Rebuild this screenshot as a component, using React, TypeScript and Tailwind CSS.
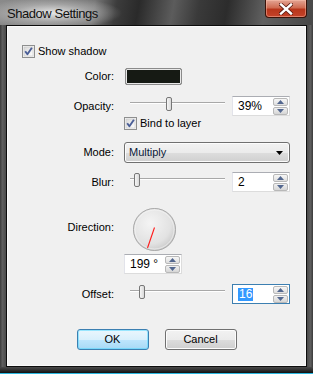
import React from "react";

const font = "font-['Liberation_Sans',Arial,sans-serif]";

function CheckBox() {
  return (
    <svg width="13" height="13" viewBox="0 0 13 13" className="shrink-0">
      <defs>
        <linearGradient id="cbg" x1="0" y1="0" x2="1" y2="1">
          <stop offset="0" stopColor="#d8d8d8" />
          <stop offset="1" stopColor="#ffffff" />
        </linearGradient>
      </defs>
      <rect x="0.5" y="0.5" width="12" height="12" fill="#f4f4f4" stroke="#8e8f8f" />
      <rect x="2" y="2" width="9" height="9" fill="url(#cbg)" stroke="#c6c6c6" strokeWidth="0.6" />
      <path d="M3.2 6.3 L5.4 9.3 L9.9 2.8" fill="none" stroke="#4a5e97" strokeWidth="1.9" strokeLinejoin="round" />
    </svg>
  );
}

function Spin() {
  return (
    <div className="flex flex-col w-[15px] h-[17px] gap-px">
      <div className="flex-1 flex items-center justify-center rounded-[2px] border border-[#b8b8b8] bg-[linear-gradient(#f7f7f7,#dedede)]">
        <svg width="7" height="4" viewBox="0 0 7 4"><path d="M0 4 L3.5 0 L7 4 Z" fill="#53678f" /></svg>
      </div>
      <div className="flex-1 flex items-center justify-center rounded-[2px] border border-[#b8b8b8] bg-[linear-gradient(#f0f0f0,#d6d6d6)]">
        <svg width="7" height="4" viewBox="0 0 7 4"><path d="M0 0 L3.5 4 L7 0 Z" fill="#53678f" /></svg>
      </div>
    </div>
  );
}

function NumBox({ value, focused, selected }: { value: string; focused?: boolean; selected?: boolean }) {
  return (
    <div
      className={
        "w-[58px] h-[20px] flex items-center justify-between bg-white border pl-[5px] pr-[1px] " +
        (focused ? "border-[#3c7fb1]" : "border-[#dcdcdc] border-t-[#abadb3] border-l-[#e2e3ea]")
      }
    >
      {selected ? (
        <span className="bg-[#3399ff] text-white px-[1px] leading-[13px] text-[12px]">{value}</span>
      ) : (
        <span className="text-[12px] text-black">{value}</span>
      )}
      <Spin />
    </div>
  );
}

function Slider({ pos }: { pos: number }) {
  return (
    <div className="relative w-[105px] h-[20px] shrink-0">
      <div className="absolute left-[6px] right-[4px] top-[6px] h-[2px] border-t border-t-[#a8a8a8] border-b border-b-[#ffffff]" />
      <div
        className="absolute top-[1px] w-[6px] h-[14px] rounded-[2px] border border-[#777777] bg-[linear-gradient(90deg,#f6f6f6,#d9d9d9)]"
        style={{ left: pos }}
      />
    </div>
  );
}

function Label({ children, extra }: { children: React.ReactNode; extra?: string }) {
  return <div className={"w-[107px] shrink-0 text-right text-[11px] text-black " + (extra || "")}>{children}</div>;
}

export default function App() {
  return (
    <div className={"w-[313px] h-[374px] flex flex-col bg-[#2a2a2a] overflow-hidden " + font}>
      {/* Title bar */}
      <div className="relative h-[25px] shrink-0 bg-[radial-gradient(ellipse_70px_16px_at_52px_13px,rgba(235,235,235,0.95),rgba(200,200,200,0.5)_55%,transparent_100%),linear-gradient(100deg,#8a8a8a_0%,#767676_30%,#3c3c3c_37%,#2a2a2a_44%,#5c5c5c_55%,#3a3a3a_63%,#2c2c2c_72%,#606060_84%,#474747_100%)]">
        <div className="absolute left-[7px] top-[4px] text-[13px] tracking-[-0.45px] text-[#111]">Shadow Settings</div>
        <div className="absolute right-[6px] top-0 w-[42px] h-[18px] rounded-b-[4px] border border-t-0 border-[#3b1208] bg-[linear-gradient(#e3a594_0%,#cf6c52_45%,#b8361b_55%,#c5432a_100%)] flex items-center justify-center shadow-[inset_0_0_0_1px_rgba(255,200,180,0.45)]">
          <svg width="14" height="12" viewBox="0 0 14 12">
            <path d="M2 1.5 L12 10.5 M12 1.5 L2 10.5" stroke="#5a1a10" strokeWidth="4" strokeLinecap="square" />
            <path d="M2 1.5 L12 10.5 M12 1.5 L2 10.5" stroke="#ffffff" strokeWidth="2.4" strokeLinecap="square" />
          </svg>
        </div>
      </div>

      {/* Middle with side frames */}
      <div className="flex flex-1">
        <div className="w-[6px] bg-[linear-gradient(90deg,#3a3a3a,#5e5e5e_40%,#4a4a4a)]" />
        <div className="flex-1 border border-[#0c0c0c] bg-[#f0f0f0] flex flex-col shadow-[inset_0_0_0_1px_#fafafa]">
          {/* Show shadow */}
          <div className="mt-[18px] h-[14px] flex items-center pl-[15px] gap-[3px]">
            <CheckBox />
            <span className="text-[11px] text-black">Show shadow</span>
          </div>
          {/* Color */}
          <div className="mt-[10px] h-[17px] flex items-center">
            <Label>Color:</Label>
            <div className="ml-[11px] w-[57px] h-[17px] rounded-[2px] border border-[#8a8a8a] bg-[#161a14] shadow-[inset_0_0_0_1px_#e8e8e8]" />
          </div>
          {/* Opacity */}
          <div className="mt-[11px] h-[19px] flex items-center">
            <Label extra="mt-[1px]">Opacity:</Label>
            <div className="ml-[10px] flex items-start h-[19px]">
              <Slider pos={42} />
              <div className="ml-[3px]">
                <NumBox value="39%" />
              </div>
            </div>
          </div>
          {/* Bind */}
          <div className="mt-[2px] h-[13px] flex items-center pl-[117px] gap-[3px]">
            <CheckBox />
            <span className="text-[11px] text-black">Bind to layer</span>
          </div>
          {/* Mode */}
          <div className="mt-[12px] h-[21px] flex items-center">
            <Label>Mode:</Label>
            <div className="ml-[10px] w-[166px] h-[21px] rounded-[3px] border border-[#707070] bg-[linear-gradient(#f2f2f2_0%,#ebebeb_50%,#dddddd_51%,#cfcfcf_100%)] flex items-center justify-between pl-[4px] pr-[6px] shadow-[inset_0_0_0_1px_#fcfcfc]">
              <span className="text-[11px] text-[#0b1a3a]">Multiply</span>
              <svg width="7" height="4" viewBox="0 0 7 4"><path d="M0 0 L7 0 L3.5 4 Z" fill="#000" /></svg>
            </div>
          </div>
          {/* Blur */}
          <div className="mt-[9px] h-[20px] flex items-center">
            <Label>Blur:</Label>
            <div className="ml-[10px] flex items-start h-[20px]">
              <Slider pos={10} />
              <div className="ml-[3px]">
                <NumBox value="2" />
              </div>
            </div>
          </div>
          {/* Direction */}
          <div className="mt-[15px] h-[44px] flex items-center">
            <Label extra="mb-[4px]">Direction:</Label>
            <div className="ml-[18px]">
              <svg width="45" height="45" viewBox="0 0 45 45">
                <defs>
                  <radialGradient id="dial" cx="0.4" cy="0.35" r="0.7">
                    <stop offset="0" stopColor="#f4f4f4" />
                    <stop offset="0.7" stopColor="#e2e2e2" />
                    <stop offset="1" stopColor="#c8c8c8" />
                  </radialGradient>
                </defs>
                <circle cx="22.5" cy="22.5" r="21.5" fill="#cfcfcf" />
                <circle cx="22.5" cy="22.5" r="21" fill="url(#dial)" stroke="#a9a9a9" strokeWidth="1" />
                <circle cx="22.5" cy="22.5" r="19.5" fill="none" stroke="#f8f8f8" strokeWidth="0.8" opacity="0.7" />
                <line x1="22.5" y1="20.5" x2="15.5" y2="41" stroke="#ff1a1a" strokeWidth="1.1" />
              </svg>
            </div>
          </div>
          {/* 199 */}
          <div className="mt-[3px] h-[20px] flex items-center pl-[117px]">
            <NumBox value="199 °" />
          </div>
          {/* Offset */}
          <div className="mt-[10px] h-[20px] flex items-center">
            <Label>Offset:</Label>
            <div className="ml-[10px] flex items-start h-[20px]">
              <Slider pos={15} />
              <div className="ml-[3px]">
                <NumBox value="16" focused selected />
              </div>
            </div>
          </div>
          {/* Buttons */}
          <div className="mt-[25px] h-[21px] flex justify-center gap-[16px]">
            <div className="w-[72px] h-[21px] rounded-[3px] border border-[#3c7fb1] bg-[linear-gradient(#eaf6fd_0%,#d9f0fc_50%,#bee6fd_51%,#a7d9f5_100%)] shadow-[inset_0_0_0_1px_#48d5ff80] flex items-center justify-center text-[11px] text-black">
              OK
            </div>
            <div className="w-[72px] h-[21px] rounded-[3px] border border-[#707070] bg-[linear-gradient(#f2f2f2_0%,#ebebeb_50%,#dddddd_51%,#cfcfcf_100%)] shadow-[inset_0_0_0_1px_#fcfcfc] flex items-center justify-center text-[11px] text-black">
              Cancel
            </div>
          </div>
        </div>
        <div className="w-[6px] bg-[linear-gradient(90deg,#4a4a4a,#5e5e5e_60%,#3a3a3a)]" />
      </div>
      {/* Bottom frame */}
      <div className="h-[6px] shrink-0 bg-[linear-gradient(#4a4a4a,#2a2a2a_60%,#111)]" />
      <div className="h-[1px] shrink-0 bg-[#2bb8e0]" />
    </div>
  );
}
